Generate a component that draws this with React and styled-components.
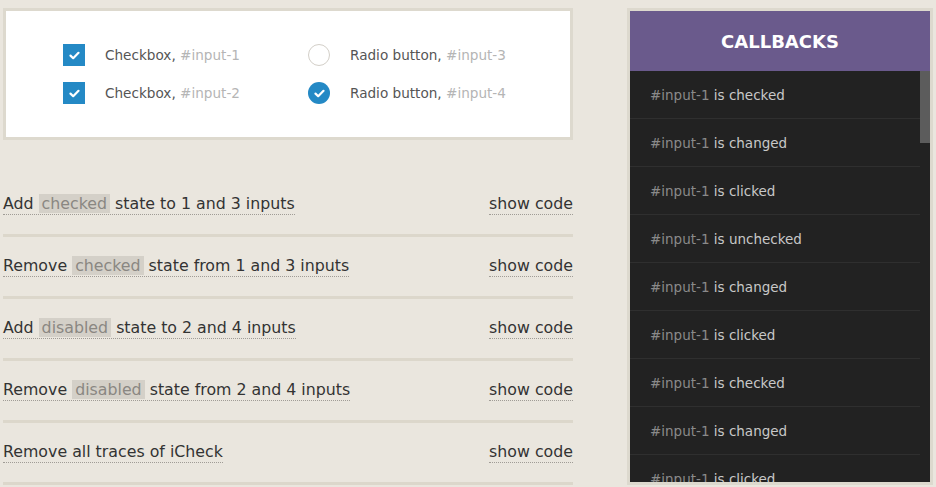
import React from "react";
import styled, { createGlobalStyle } from "styled-components";

const GlobalStyle = createGlobalStyle`
  html, body {
    margin: 0;
    padding: 0;
    background: #eae6de;
    font-family: "DejaVu Sans", "Noto Sans", sans-serif;
  }
`;

const Page = styled.div`
  display: flex;
  align-items: flex-start;
  gap: 54px;
  padding: 8px 0 0 3px;
  height: 479px;
  overflow: hidden;
`;

const Left = styled.div`
  width: 570px;
  flex: none;
`;

const Demo = styled.div`
  background: #fff;
  border: 3px solid #ddd9ce;
  padding: 33px 0 33px 57px;
  display: grid;
  grid-template-columns: 245px 245px;
  row-gap: 16px;
`;

const Option = styled.label`
  display: flex;
  align-items: center;
  gap: 20px;
  font-size: 13.6px;
  color: #555;
  cursor: pointer;
`;

const Muted = styled.span`
  color: #b5b5b5;
`;

const Box = styled.span`
  width: 22px;
  height: 22px;
  flex: none;
  display: flex;
  align-items: center;
  justify-content: center;
  box-sizing: border-box;
  border-radius: ${(p) => (p.round ? "50%" : "0")};
  background: ${(p) => (p.checked ? "#2489c5" : "#fff")};
  border: ${(p) => (p.checked ? "none" : "1px solid #d3cfc8")};
`;

const Check = () => (
  <svg width="11" height="9" viewBox="0 0 11 9">
    <path d="M1.5 4.6 L4.2 7.2 L9.5 1.8" fill="none" stroke="#fff" strokeWidth="2.2" strokeLinecap="round" strokeLinejoin="round" />
  </svg>
);

const Actions = styled.div`
  margin-top: 35px;
`;

const Row = styled.div`
  display: flex;
  justify-content: space-between;
  align-items: flex-start;
  height: 62px;
  padding-top: 19px;
  box-sizing: border-box;
  border-bottom: 3px solid #dcd7cb;
  font-size: 15.8px;
  color: #333;
`;

const Link = styled.span`
  display: inline-block;
  line-height: 20px;
  border-bottom: 1px dotted #a09c96;
  cursor: pointer;
`;

const Code = styled.span`
  display: inline-block;
  line-height: 19px;
  padding: 0 3px;
  background: #d4d0c8;
  color: #8a8782;
`;

const Panel = styled.div`
  width: 300px;
  flex: none;
  border: 3px solid #ddd9ce;
  background: #222;
`;

const Header = styled.div`
  height: 60px;
  background: #6a5a8c;
  color: #fff;
  font-weight: bold;
  font-size: 18px;
  display: flex;
  align-items: center;
  justify-content: center;
`;

const Body = styled.div`
  display: flex;
  height: 411px;
  overflow: hidden;
`;

const List = styled.ul`
  list-style: none;
  margin: 0;
  padding: 0;
  flex: 1;
`;

const Item = styled.li`
  height: 47px;
  border-bottom: 1px solid #2f2f2f;
  padding-left: 20px;
  display: flex;
  align-items: center;
  font-size: 13.5px;
  color: #c8c8c8;
`;

const Id = styled.span`
  color: #8a8a8a;
`;

const Track = styled.div`
  width: 10px;
  flex: none;
`;

const Thumb = styled.div`
  height: 72px;
  background: #5c5c5c;
`;

const options = [
  { label: "Checkbox,", id: "#input-1", round: false, checked: true },
  { label: "Radio button,", id: "#input-3", round: true, checked: false },
  { label: "Checkbox,", id: "#input-2", round: false, checked: true },
  { label: "Radio button,", id: "#input-4", round: true, checked: true },
];

const actions = [
  ["Add ", "checked", " state to 1 and 3 inputs"],
  ["Remove ", "checked", " state from 1 and 3 inputs"],
  ["Add ", "disabled", " state to 2 and 4 inputs"],
  ["Remove ", "disabled", " state from 2 and 4 inputs"],
  ["Remove all traces of iCheck"],
];

const events = ["checked", "changed", "clicked", "unchecked", "changed", "clicked", "checked", "changed", "clicked"];

export default function App() {
  return (
    <>
      <GlobalStyle />
      <Page>
        <Left>
          <Demo>
            {options.map((o) => (
              <Option key={o.id}>
                <Box round={o.round} checked={o.checked}>
                  {o.checked && <Check />}
                </Box>
                <span>
                  {o.label} <Muted>{o.id}</Muted>
                </span>
              </Option>
            ))}
          </Demo>
          <Actions>
            {actions.map((a, i) => (
              <Row key={i}>
                <Link>
                  {a[0]}
                  {a[1] && <Code>{a[1]}</Code>}
                  {a[2]}
                </Link>
                <Link>show code</Link>
              </Row>
            ))}
          </Actions>
        </Left>
        <Panel>
          <Header>CALLBACKS</Header>
          <Body>
            <List>
              {events.map((e, i) => (
                <Item key={i}>
                  <span>
                    <Id>#input-1</Id> is {e}
                  </span>
                </Item>
              ))}
            </List>
            <Track>
              <Thumb />
            </Track>
          </Body>
        </Panel>
      </Page>
    </>
  );
}
